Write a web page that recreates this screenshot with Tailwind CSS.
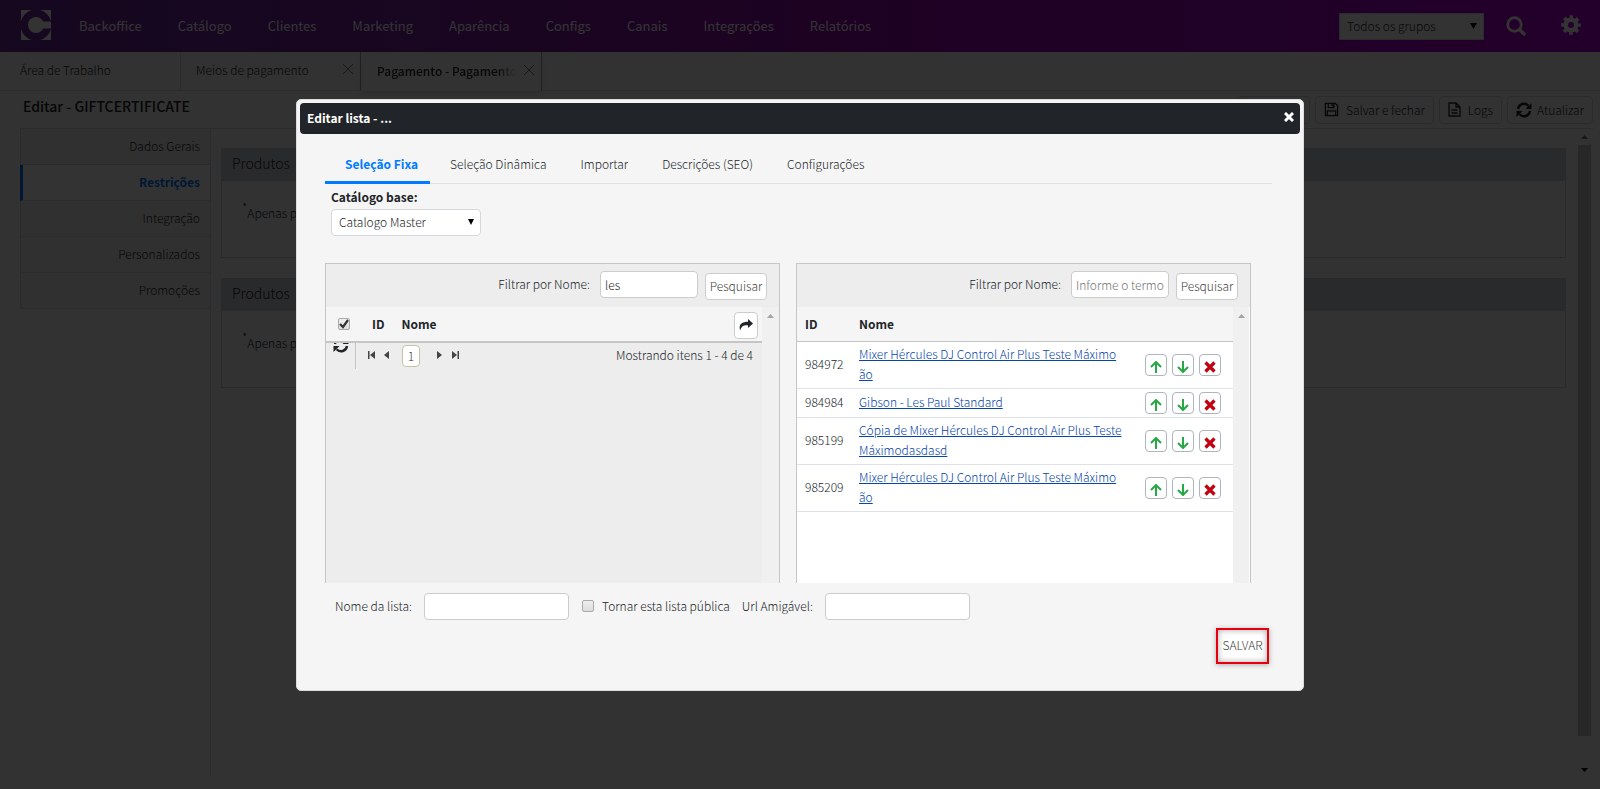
<!DOCTYPE html>
<html lang="pt-BR">
<head>
    <meta charset="UTF-8">
    <meta name="viewport" content="width=device-width, initial-scale=1.0">
    <title>Backoffice - Editar lista</title>
    <script src="https://cdn.jsdelivr.net/npm/@tailwindcss/browser@4"></script>
</head>
<body class="h-screen overflow-hidden bg-[#f8f8f8] font-['Noto_Sans_CJK_SC','Open_Sans',sans-serif] text-xs leading-5 font-light text-[#212529]">
    <svg class="hidden">
        <symbol id="icon-sync" viewBox="0 0 16 16">
            <path d="M2 7a6 6 0 0 1 10.4-3.3M14 9a6 6 0 0 1-10.4 3.3" fill="none" stroke="currentColor" stroke-width="2.4"/>
            <path d="M15.5 1v6h-6zM.5 15V9h6z" fill="currentColor"/>
        </symbol>
        <symbol id="icon-save" viewBox="0 0 16 16">
            <path d="M1.500 1.500h10.500l2.500 2.500v10.500h-13zM4.500 1.500v4.500h6v-4.500M3.500 14.500v-5h9v5" fill="none" stroke="currentColor" stroke-width="1.300"/>
            <path d="M8 2h1.500v2.500H8z" fill="currentColor"/>
        </symbol>
    </svg>

    <div class="flex h-full flex-col">
        <!-- Top navigation -->
        <header class="flex h-[52px] shrink-0 items-center bg-linear-to-r from-[#69289b] via-[#8f0aaa] to-[#af00d7] pl-[21px] pr-[19px]">
            <svg class="mb-0.5 size-[30px]" viewBox="0 0 30 30" fill="#fff">
                <mask id="ring"><path fill="#fff" d="M0 0h30v30H0z"/><circle cx="15" cy="15" r="15.500" fill="#000"/></mask>
                <path mask="url(#ring)" d="M0 0h30v30H0z"/>
                <circle cx="15" cy="15" r="8"/><path d="M15 11.500h15v7H15z"/>
            </svg>
            <nav class="ml-7 flex gap-[36px] text-[13px] font-normal text-white">
                <a href="#">Backoffice</a>
                <a href="#">Catálogo</a>
                <a href="#">Clientes</a>
                <a href="#">Marketing</a>
                <a href="#">Aparência</a>
                <a href="#">Configs</a>
                <a href="#">Canais</a>
                <a href="#">Integrações</a>
                <a href="#">Relatórios</a>
            </nav>
            <div class="relative ml-auto w-[145px]">
                <select aria-label="Grupo" class="h-[27px] w-full appearance-none border border-gray-300 bg-white pl-[7px]">
                    <option>Todos os grupos</option>
                </select>
                <svg class="pointer-events-none absolute right-[7px] top-[10px] h-[6px] w-[7px]" viewBox="0 0 7 6"><path d="M0 0h7L3.500 6z"/></svg>
            </div>
            <button aria-label="Buscar" class="ml-[22px] text-white">
                <svg class="size-5" viewBox="0 0 20 20" fill="none" stroke="currentColor"><circle cx="8.500" cy="8.500" r="6.800" stroke-width="2.800"/><path d="M13.500 13.500l4.500 4.500" stroke-width="3.400" stroke-linecap="round"/></svg>
            </button>
            <button aria-label="Configurações" class="ml-[35px] text-white">
                <svg class="mb-0.5 size-5" viewBox="0 0 20 20" fill="none" stroke="currentColor"><circle cx="10" cy="10" r="5.300" stroke-width="4.600"/><circle cx="10" cy="10" r="8.200" stroke-width="3.200" stroke-dasharray="3.500 2.940" stroke-dashoffset="1.750"/></svg>
            </button>
        </header>

        <!-- Open tabs -->
        <div class="flex h-[39px] shrink-0 border-b border-gray-300">
            <div class="flex w-[181px] items-center border-r border-gray-300 pb-0.5 pl-5">Área de Trabalho</div>
            <div class="flex w-[180px] items-center justify-between border-r border-gray-400 pb-0.5 pl-[15px] pr-[7px]">
                Meios de pagamento
                <button aria-label="Fechar aba"><svg class="mb-0.5 size-[10px]" viewBox="0 0 10 10" stroke="#777"><path d="M0 0l10 10M10 0L0 10"/></svg></button>
            </div>
            <div class="-mb-px flex w-[181px] items-center justify-between border-r border-gray-400 bg-[#f8f8f8] pb-0.5 pl-4 pr-[7px] font-medium shadow-md">
                <span class="w-[140px] whitespace-nowrap mask-r-from-85% mask-r-to-100%">Pagamento - Pagamento</span>
                <button aria-label="Fechar aba"><svg class="mb-0.5 size-[10px]" viewBox="0 0 10 10" stroke="#777"><path d="M0 0l10 10M10 0L0 10"/></svg></button>
            </div>
        </div>

        <!-- Page title and actions -->
        <div class="ml-5 mr-[7px] flex h-[38px] shrink-0 items-center justify-between border-b border-gray-300">
            <h1 class="mb-2 ml-[3px] text-sm font-medium">Editar - GIFTCERTIFICATE</h1>
            <div class="flex gap-[5px]">
                <button class="flex h-7 w-[72px] items-center justify-center gap-1 rounded-sm border border-gray-300">Salvar</button>
                <button class="flex h-7 items-center gap-[7px] rounded-sm border border-gray-300 px-2"><svg class="size-[15px]"><use href="#icon-save"/></svg>Salvar e fechar</button>
                <button class="flex h-7 items-center gap-[7px] rounded-sm border border-gray-300 px-2"><svg class="h-[15px] w-[13px]" viewBox="0 0 13 15" fill="none" stroke="currentColor" stroke-width="1.300"><path d="M1 1h7l4 4v9H1zM8 1v4h4M3.500 8h6M3.500 11h6"/></svg>Logs</button>
                <button class="flex h-7 items-center gap-[5px] rounded-sm border border-gray-300 px-2"><svg class="size-4"><use href="#icon-sync"/></svg>Atualizar</button>
            </div>
        </div>

        <div class="mb-3 ml-5 flex min-h-0 flex-1">
            <!-- Side menu -->
            <aside class="w-[191px] shrink-0 border-r border-gray-300 text-right">
                <a href="#" class="block h-9 border-b border-l border-gray-300 bg-[#efefef] py-[7px] pr-[10px]">Dados Gerais</a>
                <a href="#" class="block h-9 border-b border-l-3 border-b-gray-300 border-l-[#007bff] bg-white py-[7px] pr-[10px] font-bold text-[#007bff]">Restrições</a>
                <a href="#" class="block h-9 border-b border-l border-gray-300 bg-[#efefef] py-[7px] pr-[10px]">Integração</a>
                <a href="#" class="block h-9 border-b border-l border-gray-300 bg-[#efefef] py-[7px] pr-[10px]">Personalizados</a>
                <a href="#" class="block h-9 border-b border-l border-gray-300 bg-[#efefef] py-[7px] pr-[10px]">Promoções</a>
            </aside>
            <main class="flex-1 space-y-5 pl-[10px] pr-3 pt-[19px]">
                <section class="h-[110px] border border-[#ced2d6]">
                    <h2 class="h-8 bg-[#ced2d6] px-[10px] py-1 text-sm">Produtos</h2>
                    <p class="px-5 py-[22px]"><sup class="text-xs leading-none">*</sup>Apenas produtos</p>
                </section>
                <section class="h-[110px] border border-[#ced2d6]">
                    <h2 class="h-8 bg-[#ced2d6] px-[10px] py-1 text-sm">Produtos</h2>
                    <p class="px-5 py-[22px]"><sup class="text-xs leading-none">*</sup>Apenas produtos</p>
                </section>
            </main>
            <div class="mr-[9px] flex w-[13px] flex-col items-center pt-[6px] pb-[5px]">
                <svg class="mb-[6px] h-1 w-[7px]" viewBox="0 0 7 4" fill="#777"><path d="M0 4h7L3.500 0z"/></svg>
                <div class="mb-8 w-full flex-1 bg-[#c4c4c4]"></div>
                <svg class="h-1 w-[7px]" viewBox="0 0 7 4"><path d="M0 0h7L3.500 4z"/></svg>
            </div>
        </div>
    </div>

    <!-- Modal -->
    <div class="fixed inset-0 flex items-center justify-center bg-black/80">
        <div role="dialog" aria-labelledby="dialog-title" class="w-[63%] rounded-[5px] border border-[#dcdcdc] bg-[#f5f5f5] p-[3px]">
            <div class="flex h-[31px] items-center justify-between rounded bg-[#212529] pl-[7px] pr-[6px] font-bold text-white">
                <h2 id="dialog-title">Editar lista - ...</h2>
                <button aria-label="Fechar"><svg class="mb-0.5 size-[10px]" viewBox="0 0 10 10" stroke="#fff" stroke-width="3"><path d="M1 1l8 8M9 1L1 9"/></svg></button>
            </div>

            <div class="pl-[25px] pr-7 pt-[18px]">
                <nav class="flex h-8 border-b border-[#dee2e6]">
                    <a href="#" class="-mb-px border-b-3 border-[#007bff] pl-5 pr-3 pt-0.5 font-bold text-[#007bff]">Seleção Fixa</a>
                    <a href="#" class="pl-5 pr-[14px] pt-0.5">Seleção Dinâmica</a>
                    <a href="#" class="pl-5 pr-[14px] pt-0.5">Importar</a>
                    <a href="#" class="pl-5 pr-[14px] pt-0.5">Descrições (SEO)</a>
                    <a href="#" class="pl-5 pr-[14px] pt-0.5">Configurações</a>
                </nav>

                <div class="mt-[3px] pl-[6px]">
                    <label for="catalogo" class="block font-bold">Catálogo base:</label>
                    <div class="relative mt-0.5 w-[150px]">
                        <select id="catalogo" class="block h-[27px] w-full appearance-none rounded-sm border border-[#d5d9dd] bg-white pl-[7px]">
                            <option>Catalogo Master</option>
                        </select>
                        <svg class="pointer-events-none absolute right-[7px] top-[10px] h-[6px] w-[6px]" viewBox="0 0 6 6"><path d="M0 0h6L3 6z"/></svg>
                    </div>
                </div>

                <div class="mt-[27px] grid h-80 grid-cols-2 gap-4 pr-[21px]">
                    <!-- Search results -->
                    <section class="flex flex-col border border-b-0 border-[#c5c5c5] bg-[#ededed]">
                        <div class="flex h-[43px] shrink-0 justify-end pr-3 pt-[7px]">
                            <label for="filtro-base" class="mr-[10px] pt-[3px]">Filtrar por Nome:</label>
                            <input id="filtro-base" type="text" value="les" class="h-[27px] w-[98px] rounded-sm border border-[#ccc] bg-white px-1">
                            <button class="ml-[7px] mt-0.5 h-[27px] w-[62px] rounded-sm border border-[#ccc] bg-white text-[#444]">Pesquisar</button>
                        </div>
                        <div class="flex flex-1">
                            <div class="flex-1">
                                <div class="flex h-9 items-center border-b-2 border-[#c5c5c5] bg-[#f5f5f5] pl-3 pr-1 font-bold">
                                    <input type="checkbox" checked aria-label="Selecionar todos" class="size-3 appearance-none rounded-xs border border-[#aaa] bg-linear-to-b from-[#f0f0f0] to-[#dcdcdc]">
                                    <svg class="pointer-events-none -ml-[11px] size-[10px]" viewBox="0 0 10 10" fill="none" stroke="#333" stroke-width="2.200"><path d="M1 5l3 3 5-7"/></svg>
                                    <span class="ml-[23px]">ID</span>
                                    <span class="ml-[17px]">Nome</span>
                                    <button aria-label="Adicionar" class="ml-auto mt-[3px] flex h-[27px] w-6 items-center justify-center rounded-sm border border-[#ccc] bg-white">
                                        <svg class="h-3 w-[14px]" viewBox="0 0 14 12" fill="#212529"><path d="M9 0l5 4.500L9 9V6.300C5 6 2.500 7 1.200 11.500-.8 6 2.500 2.800 9 2.800z"/></svg>
                                    </button>
                                </div>
                                <div class="flex items-start pr-[9px]">
                                    <div class="h-[26px] w-[30px] shrink-0 overflow-hidden border-r border-[#c5c5c5] pl-[7px]">
                                        <svg class="-mt-[6px] size-4"><use href="#icon-sync"/></svg>
                                    </div>
                                    <div class="flex h-[26px] items-center pl-3 text-[#333]">
                                        <button aria-label="Primeira página"><svg class="mb-0.5 h-2 w-[7px]" viewBox="0 0 7 8" fill="#444"><path d="M0 0h1.500v8H0zM7 0v8L2 4z"/></svg></button>
                                        <button aria-label="Página anterior" class="ml-[9px]"><svg class="mb-0.5 h-2 w-[5px]" viewBox="0 0 5 8" fill="#444"><path d="M5 0v8L0 4z"/></svg></button>
                                        <button class="ml-[13px] h-[22px] w-[18px] rounded border border-[#c3c3a6] bg-white">1</button>
                                        <button aria-label="Próxima página" class="ml-[17px]"><svg class="mb-0.5 h-2 w-[5px]" viewBox="0 0 5 8" fill="#444"><path d="M0 0v8l5-4z"/></svg></button>
                                        <button aria-label="Última página" class="ml-[10px]"><svg class="mb-0.5 h-2 w-[7px]" viewBox="0 0 7 8" fill="#444"><path d="M5.500 0H7v8H5.500zM0 0v8l5-4z"/></svg></button>
                                    </div>
                                    <span class="ml-auto pt-0.5">Mostrando itens 1 - 4 de 4</span>
                                </div>
                            </div>
                            <div class="flex w-[17px] justify-center bg-[#f0f0f0] pt-[7px]"><svg class="h-1 w-[7px]" viewBox="0 0 7 4" fill="#a3a3a3"><path d="M0 4h7L3.500 0z"/></svg></div>
                        </div>
                    </section>

                    <!-- Items of the list -->
                    <section class="flex flex-col border border-b-0 border-[#c5c5c5] bg-white">
                        <div class="flex h-[43px] shrink-0 justify-end bg-[#ededed] pr-3 pt-[7px]">
                            <label for="filtro-lista" class="mr-[10px] pt-[3px]">Filtrar por Nome:</label>
                            <input id="filtro-lista" type="text" placeholder="Informe o termo" class="h-[27px] w-[98px] rounded-sm border border-[#ccc] bg-white px-1 placeholder:text-[#757575]">
                            <button class="ml-[7px] mt-0.5 h-[27px] w-[62px] rounded-sm border border-[#ccc] bg-white text-[#444]">Pesquisar</button>
                        </div>
                        <div class="flex flex-1">
                            <div class="flex-1">
                                <table class="w-full text-left">
                                    <thead>
                                        <tr class="h-[35px] border-b border-[#c5c5c5] bg-[#f5f5f5]">
                                            <th class="w-[54px] pl-2 font-bold">ID</th>
                                            <th class="pl-2 font-bold">Nome</th>
                                            <th class="w-[88px]"></th>
                                        </tr>
                                    </thead>
                                    <tbody id="items"></tbody>
                                </table>
                            </div>
                            <div class="mr-px flex w-4 justify-center bg-[#f0f0f0] pt-[7px]"><svg class="h-1 w-[7px]" viewBox="0 0 7 4" fill="#a3a3a3"><path d="M0 4h7L3.500 0z"/></svg></div>
                        </div>
                    </section>
                </div>

                <!-- List data -->
                <div class="mt-[10px] flex items-center pl-[10px]">
                    <label for="nome-lista">Nome da lista:</label>
                    <input id="nome-lista" type="text" class="ml-3 h-[27px] w-[145px] rounded-sm border border-[#ccc] bg-white px-1">
                    <input id="publica" type="checkbox" class="ml-[13px] size-3 appearance-none rounded-xs border border-[#aaa] bg-linear-to-b from-[#eee] to-[#dcdcdc]">
                    <label for="publica" class="ml-2">Tornar esta lista pública</label>
                    <label for="url" class="ml-3">Url Amigável:</label>
                    <input id="url" type="text" class="ml-3 h-[27px] w-[145px] rounded-sm border border-[#ccc] bg-white px-1">
                </div>
                <div class="mb-[23px] mt-2 flex justify-end pr-[3px]">
                    <button class="h-9 w-[53px] border-2 border-red-600 bg-white pb-0.5 text-[#444] shadow-[0_1px_5px_#aaa,inset_0_0_6px_#aaa]">SALVAR</button>
                </div>
            </div>
        </div>
    </div>

    <script>
        const items = [
            { id: 984972, name: "Mixer Hércules DJ Control Air Plus Teste Máximo ão" },
            { id: 984984, name: "Gibson - Les Paul Standard" },
            { id: 985199, name: "Cópia de Mixer Hércules DJ Control Air Plus Teste Máximodasdasd" },
            { id: 985209, name: "Mixer Hércules DJ Control Air Plus Teste Máximo ão" }
        ];

        const button = (label, paths) => `
            <button aria-label="${label}" class="flex size-[22px] items-center justify-center rounded border border-[#adb5bd] bg-white">
                <svg class="mt-1 size-3" viewBox="0 0 12 12" fill="none" stroke-width="2">${paths}</svg>
            </button>`;

        document.getElementById('items').innerHTML = items.map(item => `
            <tr class="border-b border-[#dee2e6]">
                <td class="pb-0.5 pl-2">${item.id}</td>
                <td class="pb-1 pl-2 pr-4 pt-0.5"><a href="#" class="text-[#0645ad] underline underline-offset-1">${item.name}</a></td>
                <td class="py-[3px]">
                    <div class="flex gap-[5px]">
                        ${button('Subir', '<path stroke="#28a745" d="M6 12V1M1 6l5-5 5 5"/>')}
                        ${button('Descer', '<path stroke="#28a745" d="M6 0v11M1 6l5 5 5-5"/>')}
                        ${button('Remover', '<path stroke="#c30010" stroke-width="3.200" d="M1.500 1.500l9 9M10.500 1.500l-9 9"/>')}
                    </div>
                </td>
            </tr>`).join('');
    </script>
</body>
</html>
